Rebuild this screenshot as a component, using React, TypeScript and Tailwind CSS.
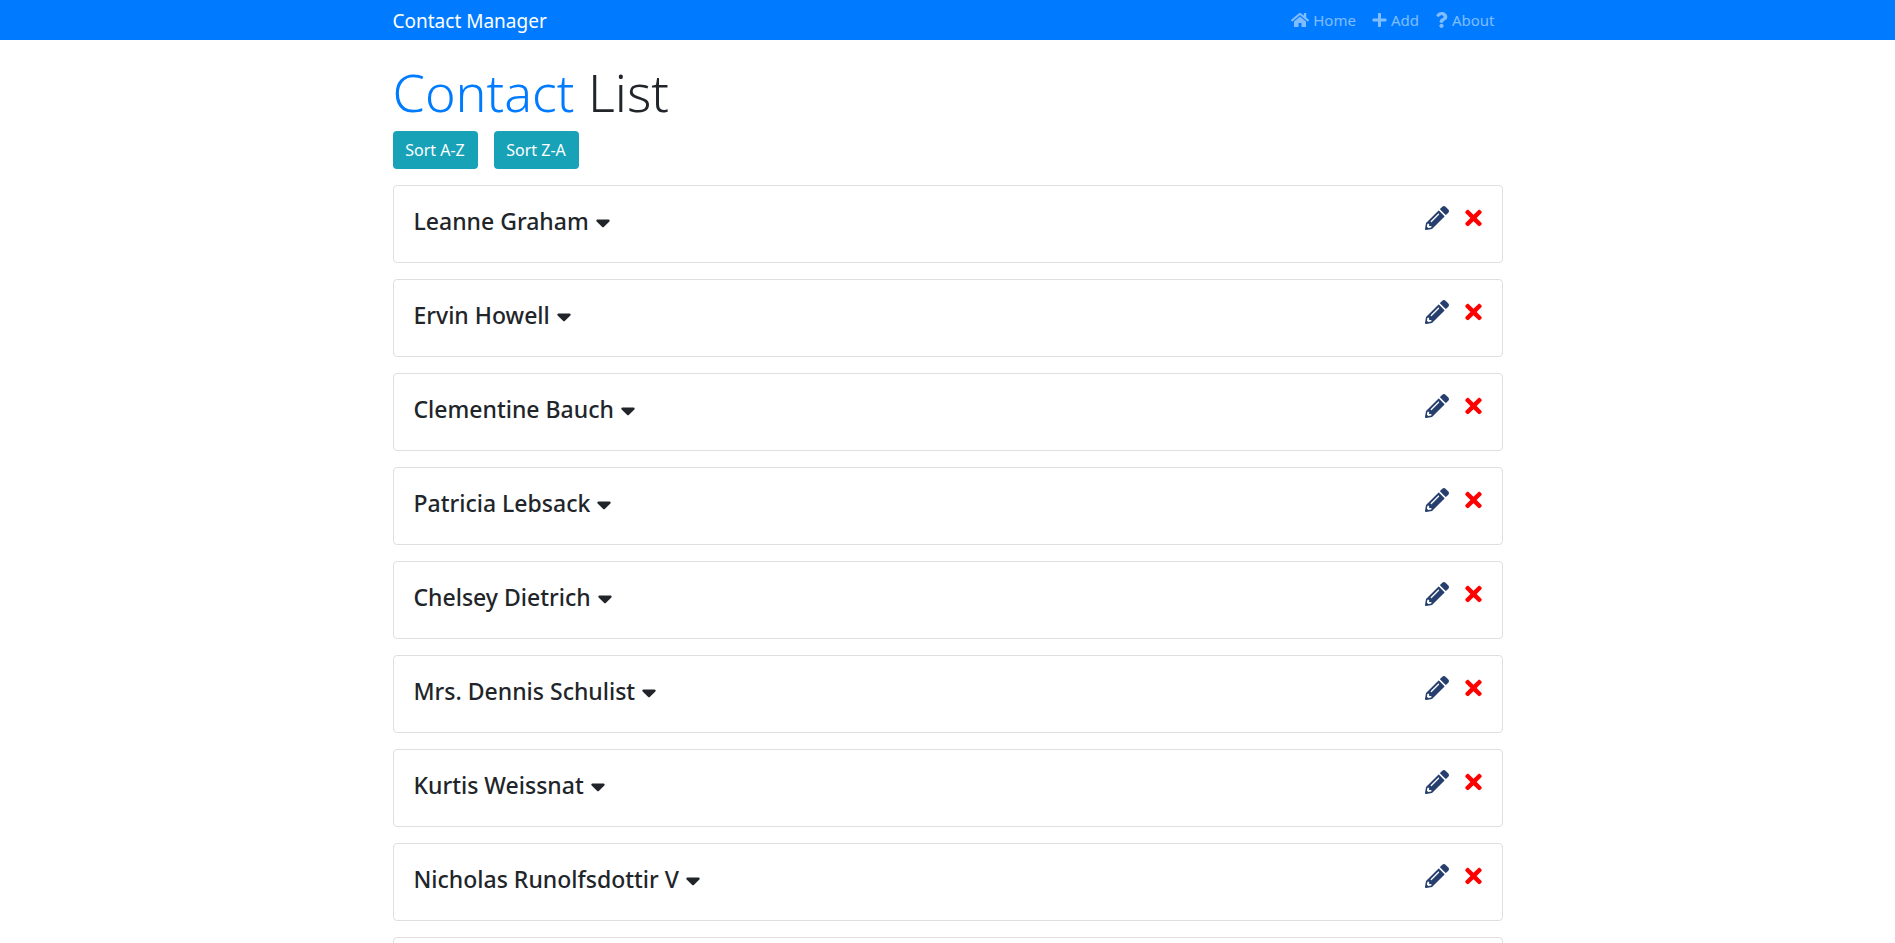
import React, { useState } from "react";
import { FaHome, FaPlus, FaQuestion, FaPencilAlt, FaTimes, FaSortDown } from "react-icons/fa";

const initialContacts: string[] = [
  "Leanne Graham",
  "Ervin Howell",
  "Clementine Bauch",
  "Patricia Lebsack",
  "Chelsey Dietrich",
  "Mrs. Dennis Schulist",
  "Kurtis Weissnat",
  "Nicholas Runolfsdottir V",
  "Glenna Reichert",
];

function NavItem({ icon, label }: { icon: React.ReactNode; label: string }) {
  return (
    <li>
      <a href="#" className="flex items-center gap-1 text-white/50 hover:text-white/75">
        {icon}
        <span>{label}</span>
      </a>
    </li>
  );
}

function Header() {
  return (
    <nav className="bg-[#007bff]">
      <div className="mx-auto flex h-10 w-full max-w-[1140px] items-center justify-between px-[15px]">
        <a href="#" className="pt-[2px] text-[19px] leading-[30px] text-white">
          Contact Manager
        </a>
        <ul className="flex gap-4 pr-2 text-[15px] leading-6">
          <NavItem icon={<FaHome className="h-4 w-[18px]" />} label="Home" />
          <NavItem icon={<FaPlus className="h-4 w-[15px]" />} label="Add" />
          <NavItem icon={<FaQuestion className="h-4 w-[13px]" />} label="About" />
        </ul>
      </div>
    </nav>
  );
}

function ContactCard({ name, onDelete }: { name: string; onDelete: () => void }) {
  return (
    <li className="flex min-h-[78px] items-start justify-between rounded border border-[#dfdfdf] bg-white p-5">
      <h4 className="flex items-start gap-[6px] text-[23px] leading-[30px] font-medium">
        <span>{name}</span>
        <button type="button" aria-label={`Show details of ${name}`} className="cursor-pointer">
          <FaSortDown className="h-6 w-4" />
        </button>
      </h4>
      <div className="flex gap-4">
        <a href="#" aria-label={`Edit ${name}`} className="text-[#263f6e]">
          <FaPencilAlt className="size-6" />
        </a>
        <button type="button" aria-label={`Delete ${name}`} onClick={onDelete} className="cursor-pointer text-[#ff0000]">
          <FaTimes className="h-6 w-[17px]" />
        </button>
      </div>
    </li>
  );
}

function SortButton({ label, onClick }: { label: string; onClick: () => void }) {
  return (
    <button
      type="button"
      onClick={onClick}
      className="h-[38px] w-[85px] cursor-pointer rounded bg-[#17a2b8] text-[16px] leading-6 text-white"
    >
      {label}
    </button>
  );
}

export default function App() {
  const [contacts, setContacts] = useState(initialContacts);
  const sorted = (direction: number) =>
    setContacts([...contacts].sort((a, b) => direction * a.localeCompare(b)));

  return (
    <div className="h-screen overflow-x-hidden overflow-y-auto bg-white font-['Noto_Sans','Open_Sans',sans-serif] text-[#212529] [scrollbar-width:none]">
      <Header />
      <main className="mx-auto w-full max-w-[1140px] px-[15px] pt-[18px]">
        <h1 className="mb-[6px] text-[52px] leading-[67px] font-light">
          <span className="text-[#007bff]">Contact</span> List
        </h1>
        <div className="mb-4 flex gap-4">
          <SortButton label="Sort A-Z" onClick={() => sorted(1)} />
          <SortButton label="Sort Z-A" onClick={() => sorted(-1)} />
        </div>
        <ul className="flex flex-col gap-4">
          {contacts.map((name) => (
            <ContactCard
              key={name}
              name={name}
              onDelete={() => setContacts(contacts.filter((contact) => contact !== name))}
            />
          ))}
        </ul>
      </main>
    </div>
  );
}
